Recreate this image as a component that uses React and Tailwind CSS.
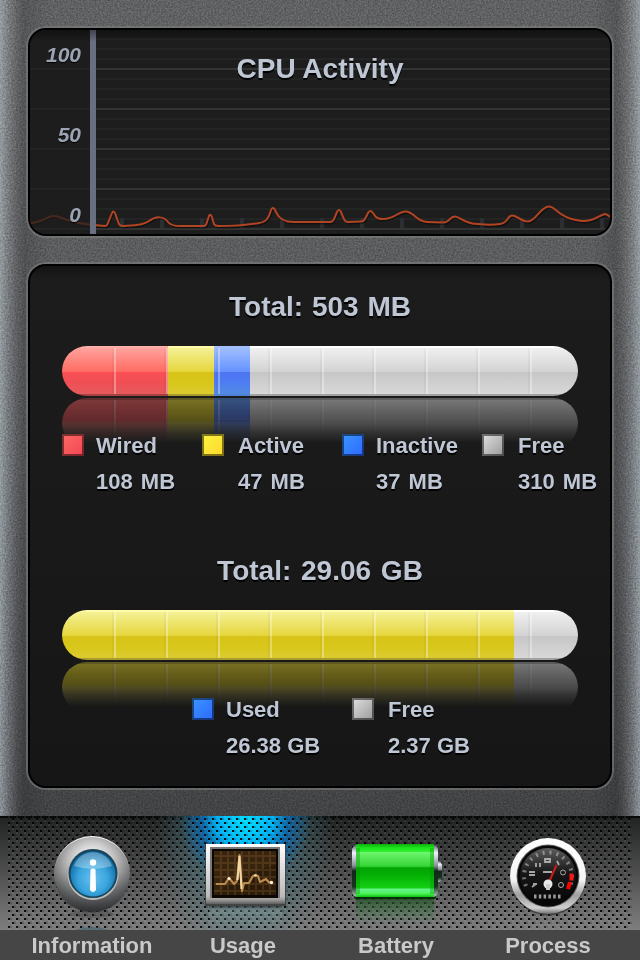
import React from 'react'

const memory = [
  { name: 'Wired', value: '108 MB', swatch: 'from-[#ff6a63] to-[#f04455]', column: 'w-[140px] gap-3' },
  { name: 'Active', value: '47 MB', swatch: 'from-[#fdf53f] to-[#fbd62c]', column: 'w-[140px] gap-3.5' },
  { name: 'Inactive', value: '37 MB', swatch: 'from-[#3c96ff] to-[#2f66ff]', column: 'w-[140px] gap-3' },
  { name: 'Free', value: '310 MB', swatch: 'from-[#e2e2e2] to-[#999999]', column: 'w-[120px] gap-3.5' },
]

const disk = [
  { name: 'Used', value: '26.38 GB', swatch: 'from-[#3c96ff] to-[#2f66ff]', column: 'w-[160px] gap-3' },
  { name: 'Free', value: '2.37 GB', swatch: 'from-[#e2e2e2] to-[#999999]', column: 'w-[130px] gap-3.5' },
]

const red = 'bg-[linear-gradient(#ffb4ae_0,#ff9d97_4px,#ff6b62_26px,#fa4f55_26px,#f04f54_36px,#e45a5c_48px,#a94042_48px)]'
const yellow = 'bg-[linear-gradient(#fffba8_0,#fffba8_2px,#f5f195_2px,#e5d53c_26px,#d8c318_26px,#d8c71c_38px,#dccb30_48px,#a99c2c_48px)]'
const blue = 'bg-[linear-gradient(#a9c2ff_0,#9bbaff_4px,#6492ff_26px,#4f74f3_26px,#4d7cf3_36px,#538ae2_48px,#4f83d8_48px)]'
const white = 'bg-[linear-gradient(#ffffff_0,#ffffff_2px,#f0f0f0_2px,#d2d2d2_26px,#c6c6c6_26px,#d8d8d8_48px,#a2a2a2_48px)]'

const memorySegments = [
  { fill: red, width: 106 },
  { fill: yellow, width: 46 },
  { fill: blue, width: 36 },
  { fill: white, width: 328 },
]

const diskSegments = [
  { fill: yellow, width: 452 },
  { fill: white, width: 64 },
]

function Capsule({ segments, className = '' }) {
  return (
    <div className={`relative flex h-[50px] w-[516px] overflow-hidden rounded-[25px] ${className}`}>
      {segments.map((s, i) => (
        <div key={i} className={s.fill} style={{ width: s.width }} />
      ))}
      {/* Divider ticks every 52px */}
      <div className="absolute inset-x-0 top-[2px] bottom-[2px] bg-[repeating-linear-gradient(90deg,transparent_0,transparent_50px,rgba(0,0,0,0.035)_50px,rgba(0,0,0,0.035)_52px)]" />
      <div className="absolute top-[2px] right-0 bottom-[2px] left-[52px] bg-[repeating-linear-gradient(90deg,rgba(255,255,255,0.32)_0,rgba(255,255,255,0.32)_2px,transparent_2px,transparent_52px)]" />
    </div>
  )
}

function UsageBar({ segments }) {
  return (
    <div className="h-[82px] w-[516px]">
      <Capsule segments={segments} />
      <div className="mt-[2px] h-[46px] overflow-hidden opacity-50 [mask-image:linear-gradient(#000_0,rgba(0,0,0,0.65)_22px,rgba(0,0,0,0.25)_34px,transparent_45px)]">
        <Capsule segments={segments} className="-scale-y-100" />
      </div>
    </div>
  )
}

function Legend({ items, className = '' }) {
  return (
    <div className={`relative flex ${className}`}>
      {items.map((item) => (
        <div key={item.name} className={`flex shrink-0 ${item.column}`}>
          <div className={`mt-1.5 h-[22px] w-[22px] shrink-0 bg-linear-to-br shadow-[inset_0_0_0_2px_rgba(0,0,0,0.5)] ${item.swatch}`} />
          <div className="text-[22px] leading-9 whitespace-nowrap">
            <p>{item.name}</p>
            <p>{item.value}</p>
          </div>
        </div>
      ))}
    </div>
  )
}

const curve =
  'M30 223C38 223 45 219 49 217Q54 215 59 217C70 222 84 225 105 226Q107 226 108 223L112 213Q113 210 115 213L119 224Q120 226 123 226C138 225 143 225 149 221C156 216 164 216 168 222Q171 226 180 226L204 226Q206 226 207 222L209 216Q210 213 212 217L214 224Q215 226 218 226C233 226 247 225 259 223C267 222 269 217 271 210Q273 205 276 212C279 219 284 222 294 222L330 222Q333 222 334 219L337 212Q339 208 341 212L344 219Q345 222 348 222L361 221.5Q364 221.5 366 217L368 213Q370 209 373 213L376 217Q378 219 383 219C395 219 397 212 405 211.5C414 211 416 222 427 222L443 222.5C450 223 449 216.5 455 216.5C460 216.5 464 224 478 224C487 225 494 225 500 224C509 223 507 215.5 512 215.5C518 215.5 521 222 528 221.5C536 221 540 207 549 206.5C555 206 558 217 576 220C592 224 599 215 605 214Q607 214 610 217'

function CpuChart() {
  return (
    <svg className="absolute inset-0" width="580" height="204" viewBox="30 30 580 204" fill="none">
      {[38, 48, 58, 78, 88, 98, 118, 128, 138, 158, 168, 178, 198, 208, 218].map((y) => (
        <rect key={y} x="96" y={y} width="514" height="2" fill="#232424" />
      ))}
      {[68, 108, 148, 188, 228].map((y) => (
        <rect key={y} x="30" y={y} width="580" height="2" fill="#323333" />
      ))}
      {[120, 160, 200, 240, 280, 320, 360, 400, 440, 480, 520, 560, 600].map((x) => (
        <rect key={x} x={x} y="218" width="4" height="10" fill="#2b2e32" />
      ))}
      <path d={curve} stroke="#000" strokeOpacity="0.4" strokeWidth="2" transform="translate(1 1.5)" />
      <path d={curve} stroke="#b14423" strokeWidth="2" />
      <rect x="30" y="30" width="60" height="204" fill="#1d1d1d" fillOpacity="0.72" />
      <rect x="90" y="30" width="6" height="204" fill="#686f80" />
    </svg>
  )
}

function InfoIcon() {
  return (
    <svg width="152" height="114" viewBox="16 816 152 114">
      <defs>
        <linearGradient id="infoRim" x1="0" y1="0" x2="0" y2="1">
          <stop offset="0" stopColor="#fff" />
          <stop offset="0.35" stopColor="#bdbdbd" />
          <stop offset="0.7" stopColor="#6f7072" />
          <stop offset="1" stopColor="#34373a" />
        </linearGradient>
        <radialGradient id="infoEdge">
          <stop offset="0.7" stopColor="#222" stopOpacity="0" />
          <stop offset="1" stopColor="#222" stopOpacity="0.5" />
        </radialGradient>
        <radialGradient id="infoFace" cx="0.5" cy="0.6" r="0.55">
          <stop offset="0" stopColor="#6bc0ee" />
          <stop offset="0.6" stopColor="#38a4dd" />
          <stop offset="1" stopColor="#146fa8" />
        </radialGradient>
      </defs>
      <ellipse cx="92" cy="914" rx="22" ry="4" fill="#222" opacity="0.25" />
      <path d="M75 930Q92 924 109 930Z" fill="#3f6072" opacity="0.6" />
      <circle cx="92" cy="874" r="38" fill="url(#infoRim)" />
      <circle cx="92" cy="875" r="38" fill="url(#infoEdge)" opacity="0.7" />
      <circle cx="93" cy="874.5" r="25.5" fill="#bcbcb8" />
      <circle cx="93" cy="873.5" r="24.5" fill="#17455d" />
      <circle cx="93" cy="874" r="22.5" fill="url(#infoFace)" />
      <path d="M74 866A20 20 0 0 1 112 866Q93 872 74 866Z" fill="#fff" opacity="0.3" />
      <circle cx="93" cy="862.5" r="3.2" fill="#fff" />
      <path d="M90.500 869.500Q93 867.500 95.500 869.500L96 890Q93 894 90 890Z" fill="#fff" />
    </svg>
  )
}

function MonitorIcon() {
  return (
    <svg width="152" height="114" viewBox="168 816 152 114">
      <defs>
        <linearGradient id="frame" x1="0" y1="0" x2="0" y2="1">
          <stop offset="0" stopColor="#fff" />
          <stop offset="0.88" stopColor="#b9b9b9" />
          <stop offset="0.94" stopColor="#929292" />
          <stop offset="1" stopColor="#5e5e5e" />
        </linearGradient>
        <linearGradient id="monitorMirror" x1="0" y1="0" x2="0" y2="1">
          <stop offset="0" stopColor="#252f30" stopOpacity="0.7" />
          <stop offset="0.25" stopColor="#a4bab8" stopOpacity="0.25" />
          <stop offset="1" stopColor="#7d9990" stopOpacity="0.1" />
        </linearGradient>
      </defs>
      <rect x="209" y="906" width="73" height="20" fill="url(#monitorMirror)" />
      <rect x="205" y="844" width="81" height="62" fill="#444" />
      <rect x="206" y="844" width="79" height="60" fill="url(#frame)" />
      <rect x="210" y="847" width="70" height="51" fill="#777" />
      <rect x="212" y="849" width="66" height="49" fill="#0c0703" />
      <rect x="214" y="851" width="62" height="44" fill="#2b1b0b" />
      <path d="M214 856h62M214 863h62M214 870h62M214 877h62M214 884h62M214 891h62M221 851v44M228 851v44M235 851v44M242 851v44M249 851v44M256 851v44M263 851v44M270 851v44" stroke="#694821" strokeWidth="2" opacity="0.45" />
      <path d="M214 851h62v14q-30 6-62 30z" fill="#d09a4c" opacity="0.07" />
      <path d="M216 884H225L229 878L234 884L237 881L239.5 855L242 891L244 883H249L253 876L255 875L258 876L260 882L266 879L269 882.5H273" fill="none" stroke="#b98b4e" strokeWidth="2.2" strokeLinejoin="round" />
      <path d="M237.5 880L239.5 856L241.5 889" fill="none" stroke="#f2d7a3" strokeWidth="2" />
      <circle cx="229" cy="878.5" r="1.5" fill="#fff0cf" />
      <circle cx="255.5" cy="875.5" r="1.3" fill="#f2d7a3" />
      <circle cx="271.5" cy="882.5" r="1.7" fill="#fff0d8" />
    </svg>
  )
}

function BatteryIcon() {
  return (
    <svg width="152" height="114" viewBox="320 816 152 114">
      <defs>
        <linearGradient id="cell" x1="0" y1="0" x2="0" y2="1">
          <stop offset="0" stopColor="#0caf0c" />
          <stop offset="0.08" stopColor="#1ce81c" />
          <stop offset="0.14" stopColor="#2fee2f" />
          <stop offset="0.16" stopColor="#6df56d" />
          <stop offset="0.42" stopColor="#35d535" />
          <stop offset="0.45" stopColor="#03a303" />
          <stop offset="0.57" stopColor="#04ae04" />
          <stop offset="0.82" stopColor="#13cf13" />
          <stop offset="0.86" stopColor="#66f58c" />
          <stop offset="0.93" stopColor="#4ef45e" />
          <stop offset="1" stopColor="#0cc40c" />
        </linearGradient>
        <linearGradient id="cap" x1="0" y1="0" x2="0" y2="1">
          <stop offset="0" stopColor="#5b6b6d" />
          <stop offset="0.15" stopColor="#f2f2ff" />
          <stop offset="0.4" stopColor="#8a8f98" />
          <stop offset="0.5" stopColor="#102718" />
          <stop offset="0.8" stopColor="#14351c" />
          <stop offset="1" stopColor="#b2ccc0" />
        </linearGradient>
        <linearGradient id="cellMirror" x1="0" y1="0" x2="0" y2="1">
          <stop offset="0" stopColor="#1e4a22" stopOpacity="0.75" />
          <stop offset="1" stopColor="#3f9a48" stopOpacity="0" />
        </linearGradient>
      </defs>
      <rect x="356" y="898" width="78" height="25" fill="url(#cellMirror)" />
      <rect x="354" y="895" width="82" height="4" rx="2" fill="#0b2c0c" />
      <path d="M436 861h3q3 1 3 5v10q0 5-3 6h-3z" fill="url(#cap)" />
      <rect x="352" y="845" width="86" height="52" rx="5" fill="url(#cap)" />
      <rect x="356" y="844" width="78" height="53" rx="1" fill="url(#cell)" />
      <path d="M358 848v46M432 848v46" stroke="#008f00" strokeWidth="4" opacity="0.35" />
    </svg>
  )
}

function GaugeIcon() {
  return (
    <svg width="152" height="114" viewBox="472 816 152 114">
      <defs>
        <linearGradient id="bezel" x1="0" y1="0" x2="0" y2="1">
          <stop offset="0" stopColor="#fff" />
          <stop offset="0.55" stopColor="#f5f5f5" />
          <stop offset="0.75" stopColor="#a0a0a0" />
          <stop offset="0.92" stopColor="#d0d0d0" />
          <stop offset="1" stopColor="#6b6b6b" />
        </linearGradient>
        <linearGradient id="dial" x1="0" y1="0" x2="0" y2="1">
          <stop offset="0" stopColor="#5c5c5c" />
          <stop offset="0.45" stopColor="#161616" />
          <stop offset="1" stopColor="#060606" />
        </linearGradient>
      </defs>
      <path d="M526 930Q548 912 570 930Z" fill="#888" opacity="0.25" />
      <circle cx="548" cy="877.5" r="38" fill="#222" opacity="0.6" />
      <circle cx="548" cy="876" r="38" fill="url(#bezel)" />
      <circle cx="548" cy="876" r="31.5" fill="#666" />
      <circle cx="548" cy="876" r="30.5" fill="#080808" />
      <circle cx="548" cy="876" r="28" fill="url(#dial)" />
      <path d="M526 886A24 24 0 1 1 570 886" fill="none" stroke="#c4c4c4" strokeWidth="4" strokeDasharray="2 5" opacity="0.55" />
      <path d="M536 863v4M540 863v4M545 859h5v3h-5zM557 861l2 4M529 872h6M529 875h6M532 887l4-3M533 884h4M543 872h9" fill="none" stroke="#d3d3d3" strokeWidth="1.8" opacity="0.75" />
      <circle cx="563" cy="872.5" r="2.500" fill="none" stroke="#aaa" />
      <circle cx="561" cy="885" r="2.500" fill="none" stroke="#aaa" />
      <path d="M571.5 873.5v7" stroke="#ff1414" strokeWidth="4" />
      <path d="M570 882l-2 7" stroke="#f00" strokeWidth="4" />
      <path d="M549 882L556.5 865" stroke="#c51b1b" strokeWidth="2.2" />
      <circle cx="548" cy="884" r="4.5" fill="#e7e7e7" />
      <path d="M548 884v6" stroke="#ccc" strokeWidth="4" />
      <path d="M534 896.5h28" stroke="#b5b5b5" strokeWidth="4" strokeDasharray="2.5 2.3" opacity="0.85" />
    </svg>
  )
}

const tabs = [
  { label: 'Information', Icon: InfoIcon },
  { label: 'Usage', Icon: MonitorIcon, active: true },
  { label: 'Battery', Icon: BatteryIcon },
  { label: 'Process', Icon: GaugeIcon },
]

function TabBar() {
  return (
    <nav className="relative h-[144px] overflow-hidden bg-[linear-gradient(#202121,#7e7e7e_114px)] shadow-[inset_0_2px_0_#090909]">
      {/* Light behind the selected tab */}
      <div className="absolute top-0 left-[155px] h-[144px] w-[180px] bg-[radial-gradient(ellipse_90px_150px_at_90px_0,rgba(20,125,180,0.8),rgba(70,130,140,0.35)_65%,transparent)]" />
      <div className="absolute top-0 left-[175px] h-[70px] w-[140px] bg-[radial-gradient(ellipse_66px_62px_at_70px_6px,#00dcff,#00b4f4_40%,rgba(0,110,200,0.6)_66%,transparent)]" />
      {/* Perforated metal */}
      <svg className="absolute top-0 left-2" width="624" height="114">
        <defs>
          <pattern id="holes" width="8" height="8" patternUnits="userSpaceOnUse">
            <rect x="0" y="6" width="2" height="2" fill="#000" opacity="0.9" />
            <rect x="4" y="2" width="2" height="2" fill="#000" opacity="0.9" />
            <rect x="2" y="6" width="2" height="2" fill="#000" opacity="0.2" />
            <rect x="6" y="2" width="2" height="2" fill="#000" opacity="0.2" />
            <rect x="0" y="0" width="2" height="2" fill="#fff" opacity="0.07" />
            <rect x="4" y="4" width="2" height="2" fill="#fff" opacity="0.07" />
          </pattern>
        </defs>
        <rect width="624" height="114" fill="url(#holes)" />
      </svg>
      <div className="absolute inset-x-0 bottom-0 h-[30px] bg-[#434343]/95" />
      <div className="relative flex px-4">
        {tabs.map(({ label, Icon, active }) => (
          <button key={label} className="flex w-[152px] flex-col items-center">
            <Icon />
            <span className={`h-[30px] text-[22px] leading-[31px] text-[#c9c9c9] ${active ? 'relative right-px' : ''}`}>
              {label}
            </span>
          </button>
        ))}
      </div>
    </nav>
  )
}

const panel = 'relative overflow-hidden rounded-[18px] border-2 border-black shadow-[0_0_0_2px_rgba(125,126,126,0.6)]'

export default function App() {
  return (
    <div className="relative flex h-[960px] w-[640px] flex-col overflow-hidden bg-[linear-gradient(#606162,#56585a_500px,#424345_816px)] font-['Liberation_Sans',Arial,sans-serif] font-bold text-[#bfc7d5]">
      {/* Brushed edges */}
      <div className="absolute inset-0 bg-[linear-gradient(90deg,rgba(180,190,196,0.65)_0,rgba(160,168,174,0.4)_8px,rgba(110,114,118,0.1)_17px,rgba(0,0,0,0.12)_24px,transparent_50px,transparent_590px,rgba(0,0,0,0.12)_616px,rgba(110,114,118,0.1)_623px,rgba(160,168,174,0.4)_632px,rgba(180,190,196,0.65)_640px)]" />
      <svg className="absolute inset-0 opacity-20 mix-blend-overlay" width="640" height="816">
        <filter id="grain" x="0" y="0" width="100%" height="100%" colorInterpolationFilters="sRGB">
          <feTurbulence type="fractalNoise" baseFrequency="0.6" numOctaves="2" seed="4" />
          <feColorMatrix values="1.6 0 0 0 -0.3  1.6 0 0 0 -0.3  1.6 0 0 0 -0.3  0 0 0 0 1" />
        </filter>
        <rect width="640" height="816" filter="url(#grain)" />
      </svg>

      <main className="relative flex h-[816px] shrink-0 flex-col gap-7 px-7 pt-7">
        <section className={`h-[208px] shrink-0 bg-[#1d1d1d] ${panel}`}>
          <CpuChart />
          <div className="absolute inset-x-0 top-0 h-3 bg-linear-to-b from-black/40 to-transparent" />
          <h2 className="relative pt-[23px] text-center text-[28px] leading-8 [text-shadow:0_2px_0_#000]">
            CPU Activity
          </h2>
          <div className="absolute top-0 left-0 flex h-[204px] w-[51px] flex-col items-end text-[21px] leading-5 text-[#9ba4b5] italic [text-shadow:0_1px_1px_#000]">
            <span className="pt-[15px]">100</span>
            <span className="pt-[60px]">50</span>
            <span className="pt-[60px]">0</span>
          </div>
        </section>

        <section className={`h-[524px] shrink-0 bg-[linear-gradient(#131313,#1c1c1c_12px,#161616)] pt-[25px] pl-8 [text-shadow:0_2px_0_#000] ${panel}`}>
          <h2 className="mr-8 text-center text-[28px] leading-8 [word-spacing:1px]">Total: 503 MB</h2>
          <div className="pt-[23px]">
            <UsageBar segments={memorySegments} />
            <Legend items={memory} className="[word-spacing:2px]" />
          </div>
          <h2 className="mr-8 pt-[55px] text-center text-[28px] leading-8 [word-spacing:2px]">Total: 29.06 GB</h2>
          <div className="pt-[23px]">
            <UsageBar segments={diskSegments} />
            <Legend items={disk} className="pl-[130px]" />
          </div>
        </section>
      </main>

      <TabBar />
    </div>
  )
}
